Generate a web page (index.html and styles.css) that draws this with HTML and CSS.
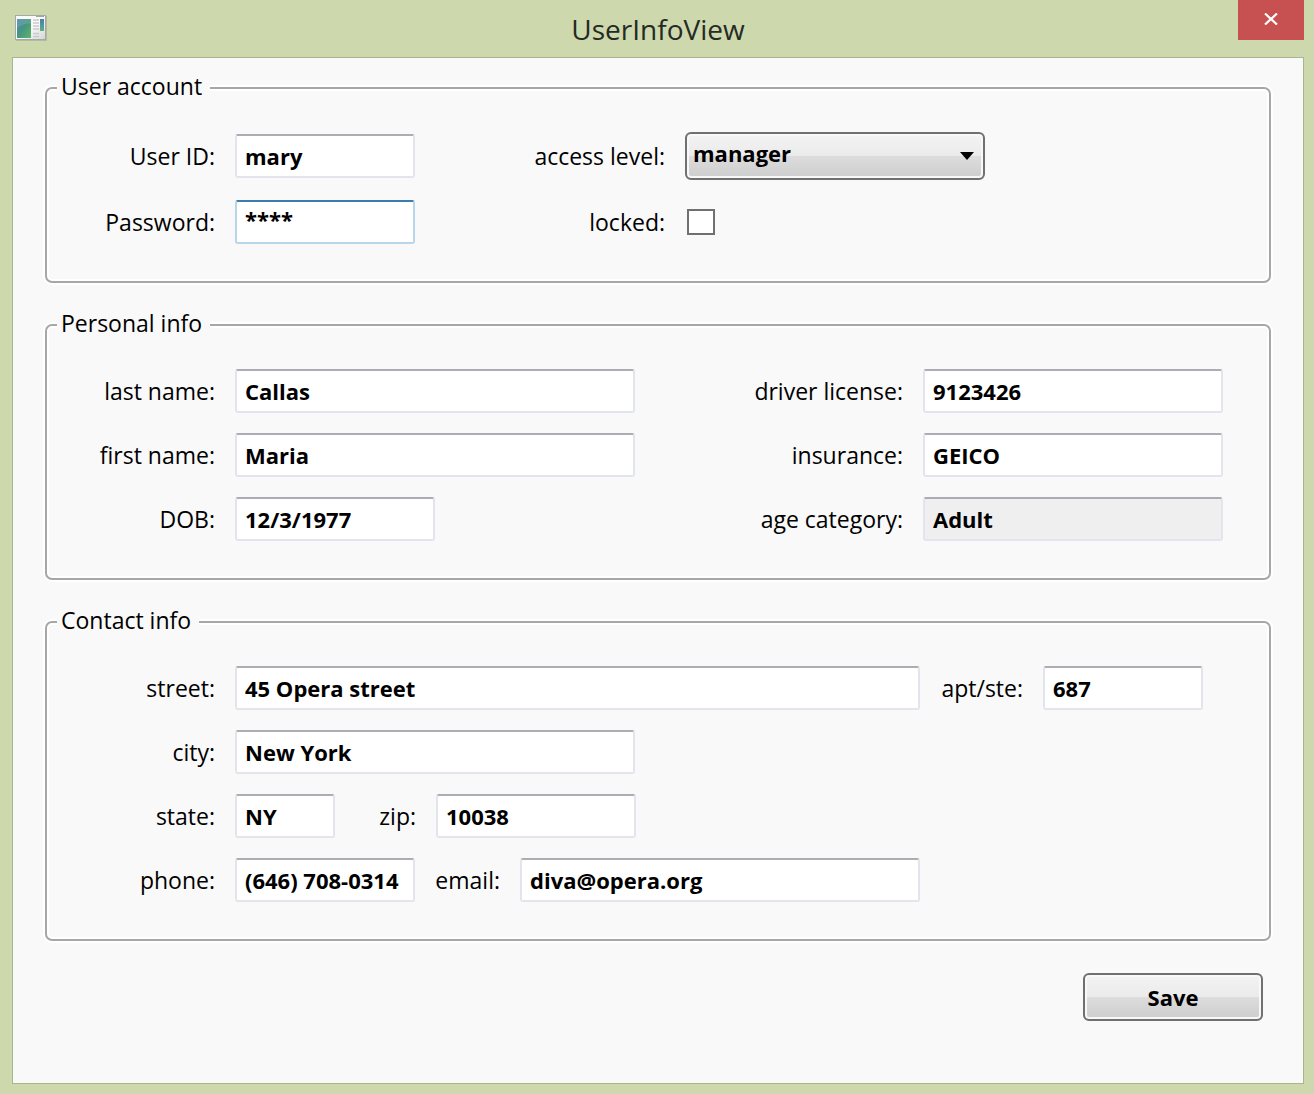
FILE: index.html
```html
<!DOCTYPE html>
<html lang="en">
<head>
  <meta charset="utf-8">
  <meta name="viewport" content="width=device-width, initial-scale=1">
  <title>UserInfoView</title>
  <link rel="stylesheet" href="styles.css">
</head>
<body>
  <div class="window">
    <header class="titlebar">
      <svg class="app-icon" width="32" height="26" viewBox="0 0 32 26" aria-hidden="true">
        <defs>
          <linearGradient id="pane" x1="0" y1="0" x2="1" y2="1">
            <stop offset="0" stop-color="#4a86ae"/>
            <stop offset="0.5" stop-color="#46977f"/>
            <stop offset="1" stop-color="#62b566"/>
          </linearGradient>
          <linearGradient id="side" x1="0" y1="0" x2="0" y2="1">
            <stop offset="0" stop-color="#447fb0"/>
            <stop offset="1" stop-color="#62ad84"/>
          </linearGradient>
          <linearGradient id="frame" x1="0" y1="0" x2="1" y2="1">
            <stop offset="0.5" stop-color="#fafafa"/>
            <stop offset="1" stop-color="#d4d6d6"/>
          </linearGradient>
        </defs>
        <rect x="0.5" y="0.5" width="30" height="24" fill="url(#frame)" stroke="#a3a8a8"/>
        <path d="M1 25.500h30.500V1" fill="none" stroke="#b3bb9c"/>
        <path d="M21 1.500h8" stroke="#9ba5ad"/>
        <rect x="2" y="4" width="14" height="19" fill="url(#pane)"/>
        <path d="M2 13Q8 8 16 8.500V4H2z" fill="#fff" opacity="0.12"/>
        <path d="M18 5h6M18 8h6M18 11h6M18 14h6M18 18.500h6M18 21.500h6" stroke="#cacaca" stroke-width="1.500"/>
        <rect x="25" y="4" width="4" height="12" fill="url(#side)"/>
      </svg>
      <h1 class="title">UserInfoView</h1>
      <button class="close" type="button" aria-label="Close">
        <svg width="14" height="12" viewBox="0 0 14 12" aria-hidden="true">
          <path d="M1 0.500L13 11.500M13 0.500L1 11.500" stroke="#fff" stroke-width="2.200"/>
        </svg>
      </button>
    </header>

    <form class="client">
      <fieldset class="group">
        <legend>User account</legend>
        <div class="grid account">
          <label for="user-id">User ID:</label>
          <input class="field" id="user-id" type="text" value="mary">
          <label for="access">access level:</label>
          <select class="picker" id="access"><option>manager</option></select>
          <label for="password">Password:</label>
          <input class="field active masked" id="password" type="text" value="****">
          <label for="locked">locked:</label>
          <input class="check" id="locked" type="checkbox">
        </div>
      </fieldset>

      <fieldset class="group">
        <legend>Personal info</legend>
        <div class="grid personal">
          <label for="last-name">last name:</label>
          <input class="field" id="last-name" type="text" value="Callas">
          <label for="license">driver license:</label>
          <input class="field" id="license" type="text" value="9123426">
          <label for="first-name">first name:</label>
          <input class="field" id="first-name" type="text" value="Maria">
          <label for="insurance">insurance:</label>
          <input class="field" id="insurance" type="text" value="GEICO">
          <label for="dob">DOB:</label>
          <input class="field medium" id="dob" type="text" value="12/3/1977">
          <label for="age">age category:</label>
          <input class="field" id="age" type="text" value="Adult" readonly>
        </div>
      </fieldset>

      <fieldset class="group">
        <legend>Contact info</legend>
        <div class="rows">
          <div class="row">
            <label class="lead" for="street">street:</label>
            <input class="field grow" id="street" type="text" value="45 Opera street">
            <label class="apt-label" for="apt">apt/ste:</label>
            <input class="field apt" id="apt" type="text" value="687">
          </div>
          <div class="row">
            <label class="lead" for="city">city:</label>
            <input class="field wide" id="city" type="text" value="New York">
          </div>
          <div class="row">
            <label class="lead" for="state">state:</label>
            <input class="field tiny" id="state" type="text" value="NY">
            <label class="zip-label" for="zip">zip:</label>
            <input class="field medium" id="zip" type="text" value="10038">
          </div>
          <div class="row">
            <label class="lead" for="phone">phone:</label>
            <input class="field phone" id="phone" type="text" value="(646) 708-0314">
            <label class="email-label" for="email">email:</label>
            <input class="field wide" id="email" type="text" value="diva@opera.org">
          </div>
        </div>
      </fieldset>

      <div class="actions">
        <button class="save" type="submit">Save</button>
      </div>
    </form>
  </div>
</body>
</html>
```
FILE: styles.css
```css
* {
  box-sizing: border-box;
}

body {
  margin: 0;
  background: #cdd8ac;
  color: #000;
  font: 22px/32px "Open Sans", "Noto Sans", sans-serif;
}

.window {
  display: flex;
  flex-direction: column;
  min-height: 100vh;
  padding: 0 10px 10px 12px;
}

.titlebar {
  display: grid;
  grid-template-columns: 66px 1fr 66px;
  height: 57px;
}

.app-icon {
  margin: 15px 0 0 3px;
}

.title {
  margin: 0;
  padding-top: 9px;
  color: #262a26;
  font-size: 28px;
  font-weight: 400;
  line-height: 40px;
  text-align: center;
}

.close {
  display: flex;
  align-items: center;
  justify-content: center;
  height: 40px;
  padding: 0 0 2px;
  border: 0;
  background: #c75050;
}

.client {
  display: flex;
  flex: 1;
  flex-direction: column;
  gap: 26px;
  padding: 14px 32px 32px;
  border: 1px solid #a9b58f;
  background: #f9f9f9;
}

.group {
  min-width: 0;
  margin: 0;
  padding: 28px 0 37px;
  border: 2px solid #a7a7a7;
  border-radius: 7px;
  box-shadow: 0 0 0 2px #fff, inset 0 0 0 2px #fff;
}

.group legend {
  margin-left: 10px;
  padding: 0 8px 4px 4px;
  background: #f9f9f9;
  font-size: 23px;
  line-height: 28px;
}

label {
  font-size: 23px;
  text-align: right;
  white-space: nowrap;
}

.grid {
  display: grid;
  align-items: center;
  gap: 20px;
}

.account {
  grid-template-columns: 168px 180px 230px 300px;
}

.personal {
  grid-template-columns: 168px minmax(200px, 400px) 1fr 300px;
  padding-right: 46px;
}

.rows {
  display: grid;
  gap: 20px;
  padding-right: 66px;
}

.row {
  display: flex;
  align-items: center;
  gap: 20px;
}

.lead {
  flex: 0 0 168px;
}

.apt-label {
  flex: 0 0 83px;
}

.zip-label {
  flex: 0 0 61px;
}

.email-label {
  flex: 0 0 65px;
}

.field {
  width: 100%;
  min-width: 0;
  height: 44px;
  padding: 0 8px;
  border: 2px solid #e2e5ec;
  border-top-color: #abadb3;
  border-radius: 3px;
  outline: 0;
  background: #fff;
  color: #000;
  font: inherit;
  font-weight: 700;
}

.field:read-only {
  background: #efefef;
}

.active {
  border-color: #b7d6ea;
  border-top-color: #3d7bad;
}

.masked {
  padding-bottom: 6px;
}

.grow {
  flex: 1;
}

.wide {
  width: 400px;
}

.medium {
  width: 200px;
}

.phone {
  width: 180px;
}

.apt {
  width: 160px;
}

.tiny {
  width: 100px;
}

.picker,
.save {
  height: 48px;
  border: 2px solid #707070;
  border-radius: 6px;
  background: linear-gradient(#f3f3f3, #ebebeb 50%, #dddddd 50%, #cdcdcd);
  box-shadow: inset 0 0 0 2px #f8f8f8;
  color: #000;
  font: inherit;
  font-weight: 700;
}

.picker {
  appearance: none;
  width: 100%;
  padding: 0 36px 6px 6px;
  background:
    url("data:image/svg+xml,%3Csvg xmlns='http://www.w3.org/2000/svg' width='14' height='8'%3E%3Cpath d='M0 0h14L7 8z'/%3E%3C/svg%3E") no-repeat right 9px center,
    linear-gradient(#f3f3f3, #ebebeb 50%, #dddddd 50%, #cdcdcd);
}

.check {
  appearance: none;
  width: 28px;
  height: 26px;
  margin: 0 0 0 2px;
  border: 2px solid #707070;
  background: #fff;
}

.check:checked {
  box-shadow: inset 0 0 0 5px #fff;
  background: #333;
}

.actions {
  display: flex;
  justify-content: flex-end;
  padding: 6px 8px 0;
}

.save {
  width: 180px;
  padding: 0;
}
```
